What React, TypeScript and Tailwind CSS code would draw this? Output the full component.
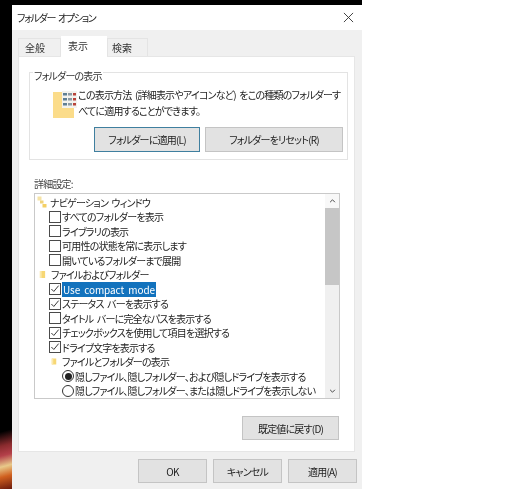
const font = 'font-["Noto_Sans_CJK_JP",sans-serif] [font-feature-settings:"palt"] [word-spacing:2px] tracking-[-0.8px]'

function Check({ checked }: { checked?: boolean }) {
  return (
    <span className="flex h-[12px] w-[12px] shrink-0 items-center justify-center border border-[#4a4a4a] bg-white">
      {checked && (
        <svg viewBox="0 0 11 11" className="h-[10px] w-[10px]" fill="none" stroke="#3a3a3a" strokeWidth="1.1">
          <path d="M1.5 5.5 L4.2 8.2 L9.5 1.8" />
        </svg>
      )}
    </span>
  )
}

function Radio({ checked }: { checked?: boolean }) {
  return (
    <span className="flex h-[12px] w-[12px] shrink-0 items-center justify-center rounded-full border border-[#333] bg-white">
      {checked && <span className="h-[7px] w-[7px] rounded-full bg-[#222]" />}
    </span>
  )
}

function TreeFolder({ small }: { small?: boolean }) {
  return (
    <svg viewBox="0 0 8 10" className={small ? 'h-[9px] w-[6px] shrink-0' : 'h-[9px] w-[7px] shrink-0'}>
      <path d="M1 1 H7 V9 H1 Z" fill="#f7d774" />
      <path d="M1 1 H3 V9 H1 Z" fill="#fbe9ad" />
    </svg>
  )
}

function NavIcon() {
  return (
    <svg viewBox="0 0 10 12" className="h-[12px] w-[10px] shrink-0">
      <rect x="0.5" y="0.5" width="4" height="4" fill="#f5e3a6" />
      <rect x="3" y="4.5" width="3.5" height="3" fill="#f0d27a" />
      <rect x="5.5" y="8" width="4" height="3.5" fill="#f4cf63" />
    </svg>
  )
}

function ViewIcon() {
  return (
    <svg viewBox="0 0 26 27" className="h-[27px] w-[26px] shrink-0">
      <rect x="0" y="1" width="21" height="26" fill="#fbdc8a" />
      <rect x="9" y="0" width="15" height="17" fill="#f3f3ee" />
      {[2, 7, 12].map((y) => (
        <g key={y}>
          <rect x="10" y={y} width="4" height="2.5" fill="#5f7f94" />
          <rect x="15" y={y} width="4" height="2.5" fill="#8c9aa3" />
          <rect x="20" y={y} width="3" height="2.5" fill="#b8433a" />
        </g>
      ))}
    </svg>
  )
}

function Btn({ label, className }: { label: string; className: string }) {
  return (
    <button
      type="button"
      className={`flex h-[24px] items-center justify-center border border-[#c4c4c4] bg-[#e2e2e2] text-[10px] text-[#222] ${className}`}
    >
      {label}
    </button>
  )
}

function CheckRow({ label, checked, selected }: { label: string; checked?: boolean; selected?: boolean }) {
  return (
    <div className="flex h-[14.5px] items-center gap-[1px] pl-[12px]">
      <Check checked={checked} />
      <span className={selected ? 'bg-[#1272bd] px-px tracking-[-0.1px] text-white' : 'text-[#222]'}>{label}</span>
    </div>
  )
}

function RadioRow({ label, checked }: { label: string; checked?: boolean }) {
  return (
    <div className="flex h-[14.5px] items-center gap-[1px] pl-[25px]">
      <Radio checked={checked} />
      <span className="text-[#222]">{label}</span>
    </div>
  )
}

export default function App() {
  return (
    <div className={`flex h-[489px] w-[525px] overflow-hidden bg-white blur-[0.35px] ${font}`}>
      <div className="flex w-[12px] shrink-0 flex-col bg-black">
        <div className="flex-1" />
        <div className="h-[62px] bg-[linear-gradient(165deg,#000_8%,#8a2b2e_30%,#b4404a_45%,#e8c98a_62%,#d0601f_78%,#6a1a0c_100%)]" />
      </div>

      <div className="flex w-[350px] shrink-0 flex-col">
        <div className="h-[5px] shrink-0 bg-black" />
        <div className="flex h-[25px] shrink-0 items-center justify-between bg-white pl-[5px] pr-[8px] text-[10px] text-[#222]">
          <span className="tracking-[-1.3px]">フォルダー オプション</span>
          <svg viewBox="0 0 12 12" className="h-[11px] w-[11px]" fill="none" stroke="#333" strokeWidth="1">
            <path d="M1 1 L11 11 M11 1 L1 11" />
          </svg>
        </div>

        <div className="flex flex-1 flex-col bg-[#f0f0f0] pl-[6px] pr-[7px]">
          <div className="flex h-[26px] shrink-0 items-end text-[10px] tracking-normal text-[#333]">
            <div className="flex h-[18px] w-[43px] items-center border border-b-0 border-[#e4e4e4] bg-[#f0f0f0] pl-[6px]">全般</div>
            <div className="z-10 -mb-px flex h-[21px] w-[46px] items-center bg-white pb-[3px] pl-[7px]">表示</div>
            <div className="flex h-[18px] w-[41px] items-center border border-b-0 border-[#e4e4e4] bg-[#f0f0f0] pl-[4px]">検索</div>
          </div>

          <div className="flex h-[396px] shrink-0 flex-col border border-[#e6e6e6] bg-white pl-[10px] pr-[7px] pt-[15px] text-[10px]">
            <div className="relative h-[88px] w-[319px] shrink-0 border border-[#e3e3e3] pl-[23px] pt-[18px]">
              <span className="absolute -top-[5px] left-[3px] bg-white px-[1px] text-[#333]">フォルダーの表示</span>
              <div className="flex">
                <ViewIcon />
                <p className="-ml-[1px] -mt-[4px] w-[268px] whitespace-nowrap text-[10px] leading-[16px] text-[#222]">
                  この表示方法 (詳細表示やアイコンなど) をこの種類のフォルダーす
                  <br />
                  べてに適用することができます。
                </p>
              </div>
              <div className="mt-[8px] flex gap-[5px] pl-[41px]">
                <button
                  type="button"
                  className="flex h-[25px] w-[106px] items-center justify-center border border-[#3f7f9f] bg-[#e2e2e2] text-[10px] text-[#222]"
                >
                  フォルダーに適用(L)
                </button>
                <Btn label="フォルダーをリセット(R)" className="h-[25px] w-[138px]" />
              </div>
            </div>

            <div className="mt-[16px] h-[15px] pl-[5px] text-[#444]">詳細設定:</div>

            <div className="ml-[5px] mt-[2px] flex h-[206px] w-[306px] shrink-0 self-start border border-[#c9c9c9] text-[10px]">
              <div className="min-w-0 flex-1 overflow-hidden pl-[2px] pt-[1px] whitespace-nowrap">
                <div className="flex h-[14.5px] items-center gap-[3px]">
                  <NavIcon />
                  <span className="text-[#222]">ナビゲーション ウィンドウ</span>
                </div>
                <CheckRow label="すべてのフォルダーを表示" />
                <CheckRow label="ライブラリの表示" />
                <CheckRow label="可用性の状態を常に表示します" />
                <CheckRow label="開いているフォルダーまで展開" />
                <div className="flex h-[14.5px] items-center gap-[5px] pl-[2px]">
                  <TreeFolder />
                  <span className="text-[#222]">ファイルおよびフォルダー</span>
                </div>
                <CheckRow label="Use compact mode" checked selected />
                <CheckRow label="ステータス バーを表示する" checked />
                <CheckRow label="タイトル バーに完全なパスを表示する" />
                <CheckRow label="チェックボックスを使用して項目を選択する" checked />
                <CheckRow label="ドライブ文字を表示する" checked />
                <div className="flex h-[14.5px] items-center gap-[5px] pl-[14px]">
                  <TreeFolder small />
                  <span className="text-[#222]">ファイルとフォルダーの表示</span>
                </div>
                <RadioRow label="隠しファイル、隠しフォルダー、および隠しドライブを表示する" checked />
                <RadioRow label="隠しファイル、隠しフォルダー、または隠しドライブを表示しない" />
              </div>
              <div className="flex w-[14px] shrink-0 flex-col bg-[#f0f0f0]">
                <div className="flex h-[14px] items-center justify-center bg-[#f8f8f8]">
                  <svg viewBox="0 0 8 5" className="h-[4px] w-[7px]" fill="none" stroke="#444" strokeWidth="1.2">
                    <path d="M1 4 L4 1 L7 4" />
                  </svg>
                </div>
                <div className="h-[77px] bg-[#c6c6c6]" />
                <div className="flex-1" />
                <div className="flex h-[15px] items-center justify-center">
                  <svg viewBox="0 0 8 5" className="h-[4px] w-[7px]" fill="none" stroke="#444" strokeWidth="1.2">
                    <path d="M1 1 L4 4 L7 1" />
                  </svg>
                </div>
              </div>
            </div>

            <div className="mt-[17px] flex w-[310px] justify-end">
              <Btn label="既定値に戻す(D)" className="w-[97px]" />
            </div>
          </div>

          <div className="-mr-[2px] mt-[7px] flex justify-end gap-[6px]">
            <Btn label="OK" className="w-[69px]" />
            <Btn label="キャンセル" className="w-[69px]" />
            <Btn label="適用(A)" className="w-[69px]" />
          </div>
        </div>
      </div>

      <div className="flex-1 bg-white" />
    </div>
  )
}
